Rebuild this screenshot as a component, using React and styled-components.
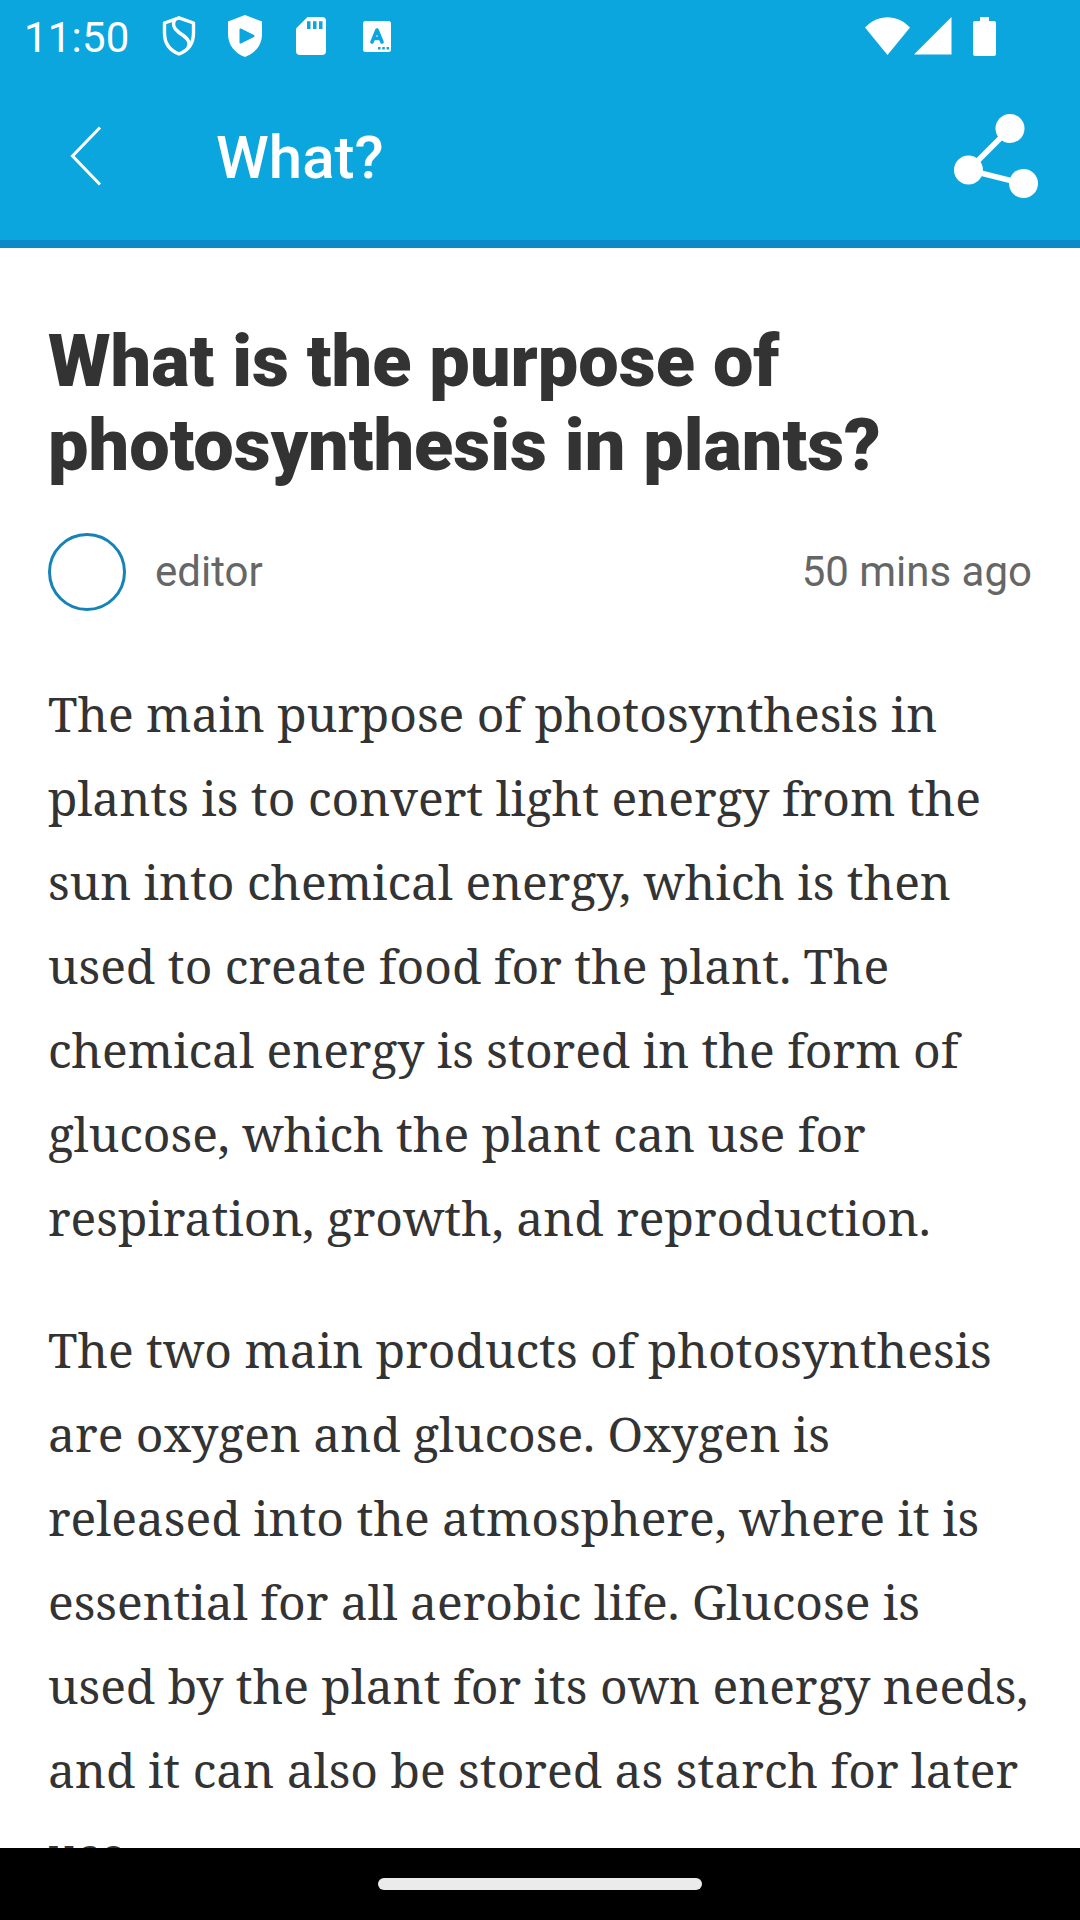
import React from "react";
import styled, { createGlobalStyle } from "styled-components";

const colors = {
  header: "#0ca6de",
  headerEdge: "#0a8bc7",
  ring: "#1683b8",
  text: "#333333",
  meta: "#666666",
};

const paragraphs = [
  [
    "The main purpose of photosynthesis in",
    "plants is to convert light energy from the",
    "sun into chemical energy, which is then",
    "used to create food for the plant. The",
    "chemical energy is stored in the form of",
    "glucose, which the plant can use for",
    "respiration, growth, and reproduction.",
  ],
  [
    "The two main products of photosynthesis",
    "are oxygen and glucose. Oxygen is",
    "released into the atmosphere, where it is",
    "essential for all aerobic life. Glucose is",
    "used by the plant for its own energy needs,",
    "and it can also be stored as starch for later",
    "use.",
  ],
];

const ShieldIcon = () => (
  <svg width="36" height="42" viewBox="0 0 36 42" fill="none">
    <path
      d="M18 2.800 L32.500 8 V18 C32.500 28 27 35.500 18 39 C9 35.500 3.500 28 3.500 18 V8 Z"
      stroke="#fff"
      strokeWidth="3.400"
      strokeLinejoin="round"
    />
    <path
      d="M14 4 C11 9 12 13 18 17.500 C24 21.500 31 26 27 33"
      stroke="#fff"
      strokeWidth="3.600"
    />
  </svg>
);

const PlayShieldIcon = () => (
  <svg width="34" height="42" viewBox="0 0 34 42">
    <path
      d="M17 0 L34 6.500 V19 C34 30 27 38.500 17 42 C7 38.500 0 30 0 19 V6.500 Z"
      fill="#fff"
    />
    <path
      d="M12.500 14.500 L25.500 21 L12.500 27.500 Z"
      fill={colors.header}
      stroke={colors.header}
      strokeWidth="2"
      strokeLinejoin="round"
    />
  </svg>
);

const SdCardIcon = () => (
  <svg width="30" height="38" viewBox="0 0 30 38">
    <path
      d="M11.500 0 H26 Q30 0 30 4 V34 Q30 38 26 38 H4 Q0 38 0 34 V11.500 Z"
      fill="#fff"
    />
    <path
      d="M11 4.300h3.500v7.700h-3.500z M17 4.300h3.500v7.700h-3.500z M23 4.300h3.500v7.700h-3.500z"
      fill={colors.header}
    />
  </svg>
);

const KeyboardIcon = () => (
  <svg width="28" height="31" viewBox="0 0 28 31">
    <rect width="28" height="31" rx="2.500" fill="#fff" />
    <path
      d="M9 21 L14 9 L19 21 M11 17.500 H17"
      fill="none"
      stroke={colors.header}
      strokeWidth="3.600"
      strokeLinecap="round"
      strokeLinejoin="round"
    />
    <path
      d="M15 26h2.500v2.500h-2.500z M19.300 26h2.500v2.500h-2.500z M23.600 26h2.500v2.500h-2.500z"
      fill={colors.header}
    />
  </svg>
);

const WifiIcon = () => (
  <svg width="46" height="38" viewBox="0 0 46 38">
    <path d="M0 10.500 C13 -3.300 32 -3.300 45 10.500 L22.500 38 Z" fill="#fff" />
  </svg>
);

const SignalIcon = () => (
  <svg width="38" height="38" viewBox="0 0 38 38">
    <path d="M37.500 0 V37.500 H0 Z" fill="#fff" />
  </svg>
);

const BatteryIcon = () => (
  <svg width="23" height="39" viewBox="0 0 23 39">
    <path
      d="M7 0 H16 V4 H21 Q23 4 23 6 V37 Q23 39 21 39 H2 Q0 39 0 37 V6 Q0 4 2 4 H7 Z"
      fill="#fff"
    />
  </svg>
);

const BackIcon = () => (
  <svg width="32" height="60" viewBox="0 0 32 60" fill="none">
    <path d="M30 1.500 L2.500 30 L30 58.500" stroke="#fff" strokeWidth="3" />
  </svg>
);

const ShareIcon = () => (
  <svg width="84" height="84" viewBox="0 0 84 84" fill="#fff">
    <path
      d="M56 14.500 L14.500 56 L69.500 69.700"
      fill="none"
      stroke="#fff"
      strokeWidth="5.500"
    />
    <circle cx="56" cy="14.500" r="14.500" />
    <circle cx="14.500" cy="56" r="14.500" />
    <circle cx="69.500" cy="69.500" r="14.500" />
  </svg>
);

const App = () => {
  return (
    <>
      <GlobalStyle />
      <Screen>
        <Header>
          <StatusBar>
            <Clock>11:50</Clock>
            <Notifications>
              <ShieldIcon />
              <PlayShieldIcon />
              <SdCardIcon />
              <KeyboardIcon />
            </Notifications>
            <SystemIcons>
              <WifiIcon />
              <SignalIcon />
              <BatteryIcon />
            </SystemIcons>
          </StatusBar>
          <Toolbar>
            <IconButton aria-label="Back">
              <BackIcon />
            </IconButton>
            <ToolbarTitle>What?</ToolbarTitle>
            <IconButton aria-label="Share">
              <ShareIcon />
            </IconButton>
          </Toolbar>
        </Header>
        <Article>
          <Title>
            What is the purpose of
            <br />
            photosynthesis in plants?
          </Title>
          <Byline>
            <Avatar />
            <Author>editor</Author>
            <Time>50 mins ago</Time>
          </Byline>
          {paragraphs.map((lines, index) => {
            return (
              <Paragraph key={index}>
                {lines.map((line) => (
                  <Line key={line}>{line}</Line>
                ))}
              </Paragraph>
            );
          })}
        </Article>
        <NavigationBar>
          <Handle />
        </NavigationBar>
      </Screen>
    </>
  );
};

const GlobalStyle = createGlobalStyle`
  body {
    margin: 0;
    background-color: white;
  }

  svg {
    display: block;
    flex-shrink: 0;
  }
`;

const Screen = styled.div`
  display: flex;
  flex-direction: column;
  width: 1080px;
  height: 1920px;
  overflow: hidden;
  font-family: Roboto, sans-serif;
`;

const Header = styled.header`
  flex-shrink: 0;
  box-sizing: border-box;
  height: 248px;
  background-color: ${colors.header};
  border-bottom: 8px solid ${colors.headerEdge};
`;

const StatusBar = styled.div`
  display: flex;
  align-items: center;
  box-sizing: border-box;
  height: 72px;
  padding: 0 84px 0 24px;
  color: white;
`;

const Clock = styled.span`
  width: 137px;
  padding-top: 3px;
  font-size: 42px;
  line-height: 48px;
  letter-spacing: 0.2px;
`;

const Notifications = styled.div`
  display: flex;
  align-items: center;
  gap: 34px;

  svg:nth-child(2) {
    margin-left: -3px;
  }

  svg:last-child {
    margin-left: 3px;
  }
`;

const SystemIcons = styled.div`
  display: flex;
  align-items: center;
  gap: 3px;
  margin-left: auto;

  svg:last-child {
    margin-left: 18px;
  }
`;

const Toolbar = styled.div`
  display: flex;
  align-items: center;
  height: 168px;
  padding: 0 42px 0 70px;
`;

const IconButton = styled.button`
  padding: 0;
  border: none;
  background: none;
`;

const ToolbarTitle = styled.h1`
  flex: 1;
  margin: 0;
  padding: 3px 0 0 114px;
  color: white;
  font-size: 60px;
  font-weight: 500;
  line-height: 72px;
`;

const Article = styled.main`
  flex: 1;
  min-height: 0;
  overflow: hidden;
  padding: 72px 48px 0;
  color: ${colors.text};
`;

const Title = styled.h2`
  margin: 0;
  font-size: 72px;
  font-weight: 900;
  line-height: 84px;
`;

const Byline = styled.div`
  display: flex;
  align-items: center;
  margin: 45px 0 61px;
  color: ${colors.meta};
  font-size: 42px;
  line-height: 48px;
`;

const Avatar = styled.div`
  box-sizing: border-box;
  width: 78px;
  height: 78px;
  border: 3px solid ${colors.ring};
  border-radius: 50%;
`;

const Author = styled.span`
  margin-left: 29px;
`;

const Time = styled.span`
  margin-left: auto;
`;

const Paragraph = styled.p`
  margin: 0 0 48px;
  font-family: "Noto Serif", "DejaVu Serif Condensed", "DejaVu Serif", serif;
  font-size: 48px;
  line-height: 84px;
`;

const Line = styled.span`
  display: block;
  white-space: nowrap;
`;

const NavigationBar = styled.footer`
  display: flex;
  flex-shrink: 0;
  align-items: center;
  justify-content: center;
  height: 72px;
  background-color: black;
`;

const Handle = styled.div`
  width: 324px;
  height: 12px;
  border-radius: 6px;
  background-color: #ebebeb;
`;

export default App;
